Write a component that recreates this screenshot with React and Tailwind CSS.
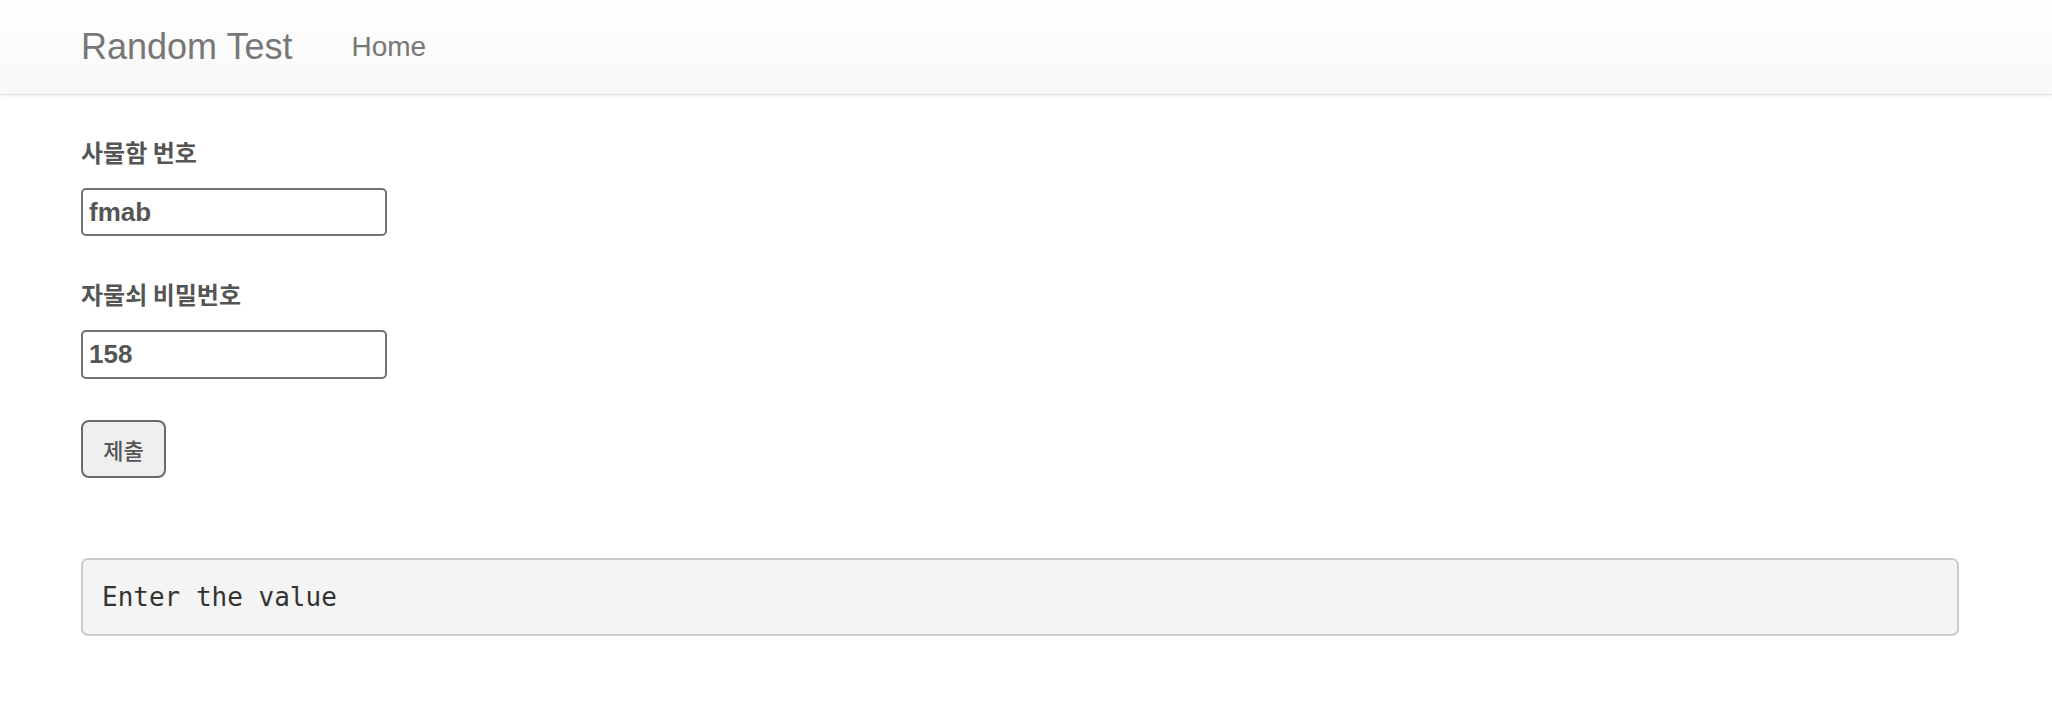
import React from "react";

export default function App() {
  const sans = { fontFamily: '"Liberation Sans", Arial, "Noto Sans CJK KR", sans-serif' };
  return (
    <div className="min-h-[726px] bg-white" style={sans}>
      <nav className="h-[95px] bg-gradient-to-b from-white to-[#f8f8f8] border-b border-[#e4e4e4] shadow-[0_1px_5px_rgba(0,0,0,0.075)] flex items-center pl-[81px]">
        <span className="text-[36px] text-[#777] leading-none">Random Test</span>
        <span className="ml-[59px] text-[28px] text-[#777] leading-none">Home</span>
      </nav>

      <div className="ml-[81px] w-[1878px]">
        <div className="mt-[42px] text-[24px] leading-[30px] font-bold text-[#555] font-['Noto_Sans_CJK_KR',sans-serif]">사물함 번호</div>
        <input
          readOnly
          value="fmab"
          className="mt-[21px] block w-[306px] h-[48px] border-2 border-[#727272] rounded-[5px] px-[6px] text-[26px] font-bold text-[#555] outline-none"
          style={sans}
        />

        <div className="mt-[43px] text-[24px] leading-[30px] font-bold text-[#555] font-['Noto_Sans_CJK_KR',sans-serif]">자물쇠 비밀번호</div>
        <input
          readOnly
          value="158"
          className="mt-[21px] block w-[306px] h-[49px] border-2 border-[#727272] rounded-[5px] px-[6px] text-[26px] font-bold text-[#555] outline-none"
          style={sans}
        />

        <button className="mt-[41px] block w-[85px] h-[58px] bg-[#efefef] border-2 border-[#6a6a6a] rounded-[8px] text-[22px] font-medium text-[#555] font-['Noto_Sans_CJK_KR',sans-serif]">
          제출
        </button>

        <pre className="mt-[80px] h-[78px] bg-[#f4f4f4] border-2 border-[#cccccc] rounded-[7px] px-[19px] flex items-center text-[26px] text-[#333] font-['DejaVu_Sans_Mono',monospace]">
          Enter the value
        </pre>
      </div>
    </div>
  );
}
